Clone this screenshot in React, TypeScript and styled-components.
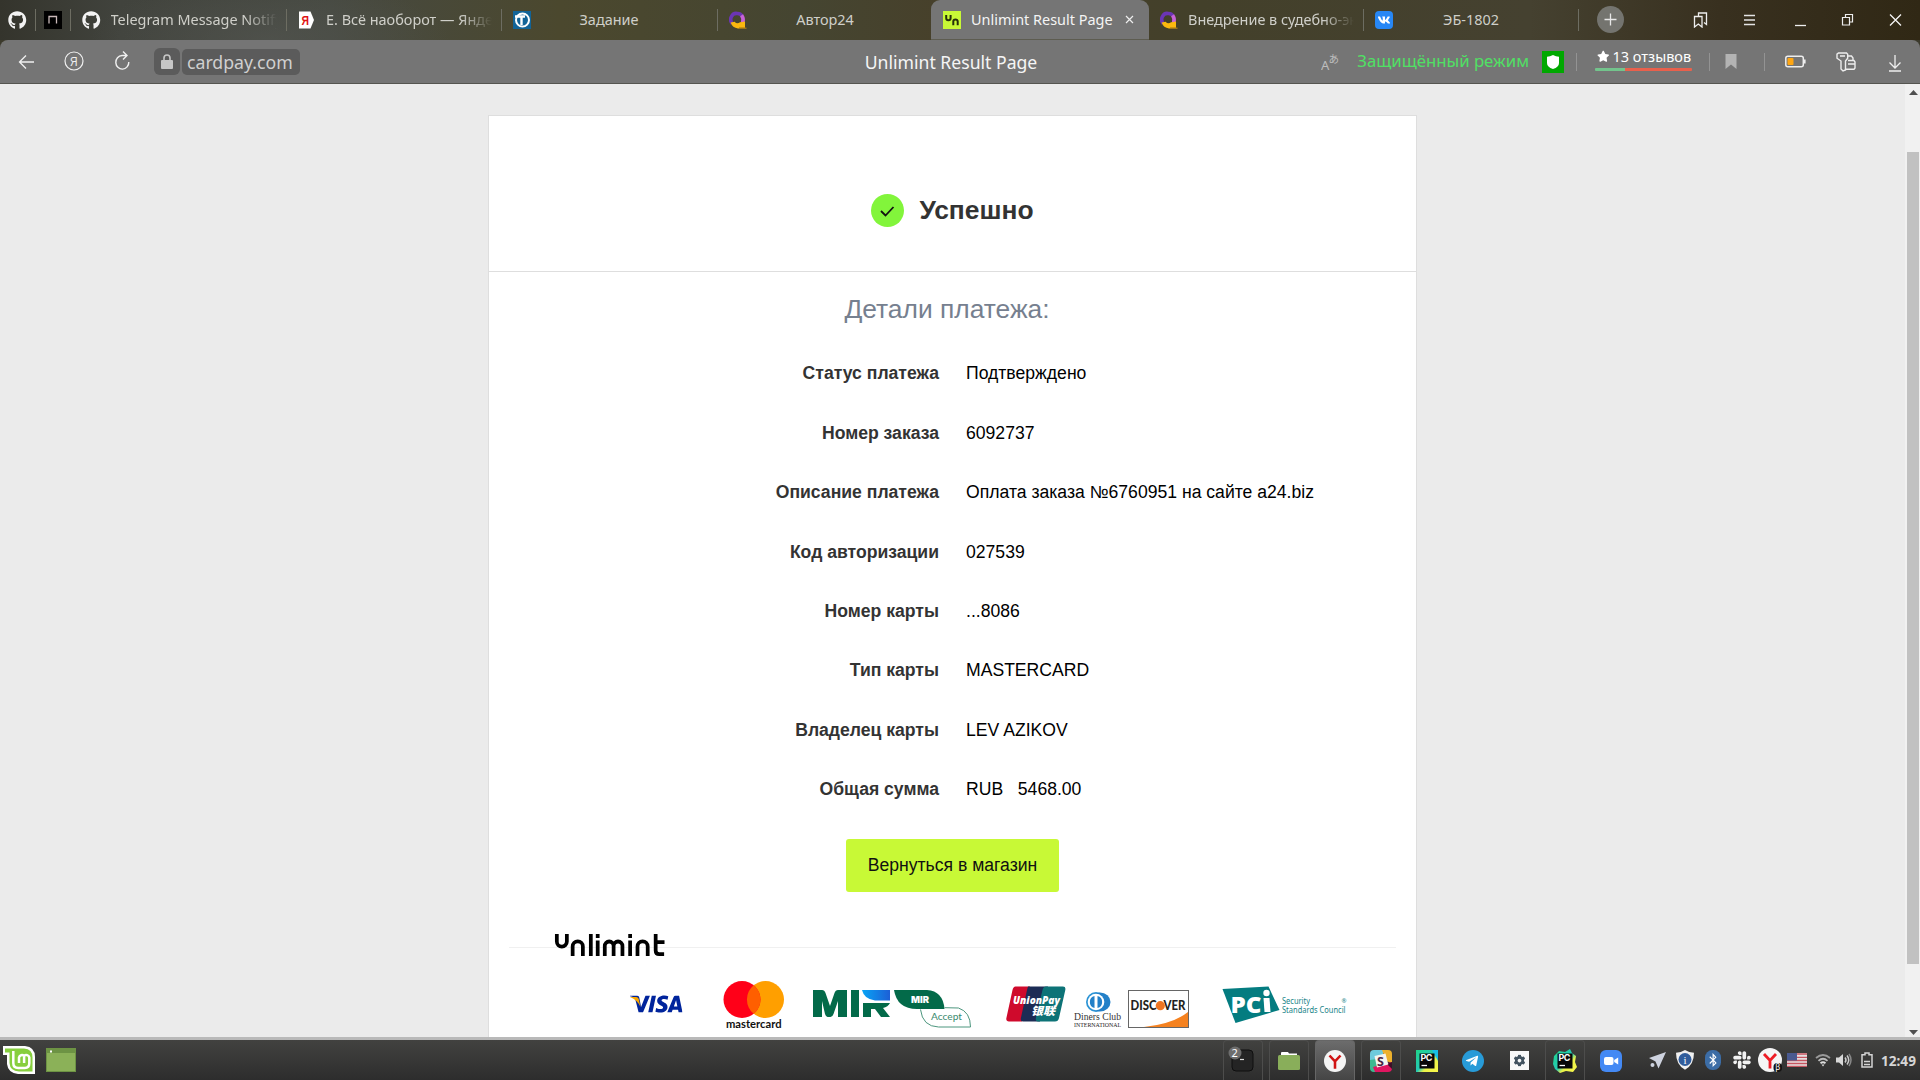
import React from "react";
import styled, { createGlobalStyle, css } from "styled-components";
import { FaGithub, FaVk, FaCog, FaSlack, FaBluetoothB, FaTelegramPlane, FaStar } from "react-icons/fa";
import { SiVisa } from "react-icons/si";

const Global = createGlobalStyle`
  html, body { margin: 0; padding: 0; overflow: hidden; background: #ebebeb; }
  svg { display: block; flex: none; }
  svg text { white-space: pre; }
`;

const ui = `"Noto Sans", "Open Sans", sans-serif`;
const sans = `"Liberation Sans", Arial, sans-serif`;

const Screen = styled.div`
  width: 1920px;
  height: 1080px;
  display: flex;
  flex-direction: column;
  font-family: ${ui};
`;

/* ---------- tab strip ---------- */
const TabStrip = styled.header`
  height: 40px;
  flex: none;
  display: flex;
  background:
    radial-gradient(ellipse 180px 60px at 270px 40px, rgba(86, 88, 84, 0.55), transparent),
    linear-gradient(90deg, #34342c 0, #41433d 120px, #464941 330px, #4b482e 560px, #454531 800px, #47402a 950px, #43402a 1200px, #454130 1530px, #38301f 1720px, #302815 1920px);
`;

const Tab = styled.div<{ $w: number; $sep?: boolean; $active?: boolean }>`
  width: ${(p) => p.$w}px;
  height: 40px;
  box-sizing: border-box;
  flex: none;
  display: flex;
  align-items: center;
  padding-left: ${(p) => (p.$active ? 12 : p.$w < 50 ? 8 : 11)}px;
  background-image: ${(p) => (p.$sep ? "linear-gradient(#6d6d62, #6d6d62)" : "none")};
  background-repeat: no-repeat;
  background-size: 1px 22px;
  background-position: right 9px;
  ${(p) =>
    p.$active &&
    css`
      background: #757575;
      border-radius: 9px 9px 0 0;
      border-bottom: 1px solid #5d5c50;
    `}
`;

const TabTitle = styled.span<{ $fade?: boolean; $center?: boolean; $on?: boolean }>`
  width: ${(p) => (p.$center ? 156 : p.$on ? 143 : 167)}px;
  margin-left: ${(p) => (p.$center ? 0 : 10)}px;
  margin-top: ${(p) => (p.$on ? 0 : -1)}px;
  text-align: ${(p) => (p.$center ? "center" : "left")};
  font-size: 14.45px;
  line-height: 20px;
  white-space: nowrap;
  overflow: hidden;
  color: ${(p) => (p.$on ? "#f4f4f4" : "#cfcfc9")};
  ${(p) => p.$fade && css`mask-image: linear-gradient(90deg, #000 135px, transparent 166px);`}
`;

const NewTab = styled.div`
  width: 27px;
  height: 27px;
  margin: 6px 0 0 18px;
  border-radius: 50%;
  background: #74746f;
`;

const WindowButtons = styled.div`
  display: flex;
  align-items: center;
  gap: 35px;
  margin-left: auto;
  padding: 0 18px 1px 0;
`;

/* ---------- toolbar ---------- */
const ToolbarBack = styled.div`
  height: 44px;
  flex: none;
  background: #3c3a2c;
`;

const Toolbar = styled.nav`
  height: 44px;
  box-sizing: border-box;
  display: grid;
  grid-template-columns: 1fr auto 1fr;
  align-items: center;
  background: #757575;
  border-bottom: 1px solid #555550;
  border-radius: 8px 8px 0 0;
`;

const ToolLeft = styled.div`
  display: flex;
  align-items: center;
  padding-left: 18px;
  margin-right: 15px;
`;

const LockBox = styled.div`
  width: 26px;
  height: 27px;
  margin: 0 2px 0 24px;
  border-radius: 6px;
  background: #5b5b5b;
  display: flex;
  align-items: center;
  justify-content: center;
`;

const Url = styled.div`
  height: 26px;
  width: 118px;
  box-sizing: border-box;
  padding-left: 5px;
  border-radius: 5px;
  background: #5b5b5b;
  color: #d0d0d0;
  font-size: 17.7px;
  line-height: 26px;
`;

const PageTitle = styled.div`
  font-size: 17.6px;
  line-height: 26px;
  color: #f5f5f5;
  white-space: nowrap;
  margin-right: 18px;
`;

const ToolRight = styled.div`
  display: flex;
  align-items: center;
  justify-content: flex-end;
  padding-right: 18px;
`;

const Secure = styled.span`
  margin: -2px 0 0 18px;
  font-size: 16.75px;
  line-height: 22px;
  color: #50e064;
  white-space: nowrap;
`;

const ShieldBox = styled.div`
  width: 22px;
  height: 22px;
  margin: 1px 0 0 13px;
  background: #00a800;
  display: flex;
  align-items: center;
  justify-content: center;
`;

const Divider = styled.i<{ $l: number; $r: number }>`
  width: 1px;
  height: 18px;
  margin: 0 ${(p) => p.$r}px 0 ${(p) => p.$l}px;
  background: #939393;
`;

const Reviews = styled.div`
  width: 97px;
  height: 28px;
  margin-top: -10px;
  display: flex;
  flex-direction: column;
`;

const ReviewText = styled.div`
  display: flex;
  align-items: center;
  gap: 3px;
  padding: 2px 0 0 2px;
  height: 24px;
  font-size: 14.5px;
  color: #fff;
  white-space: nowrap;
`;

const ReviewBar = styled.div`
  height: 3px;
  border-radius: 1px;
  background: linear-gradient(90deg, #73c48c 30px, #e9604c 30px);
`;

/* ---------- page ---------- */
const Viewport = styled.main`
  height: 953px;
  flex: none;
  display: flex;
  background: #ebebeb;
  overflow: hidden;
`;

const PageArea = styled.div`
  width: 1905px;
  display: flex;
  justify-content: center;
  padding-top: 31px;
`;

const Card = styled.section`
  width: 929px;
  height: 960px;
  flex: none;
  box-sizing: border-box;
  border: 1px solid #dedede;
  background: #fff;
  font-family: ${sans};
  display: flex;
  flex-direction: column;
`;

const Status = styled.div`
  height: 156px;
  box-sizing: border-box;
  padding-top: 34px;
  flex: none;
  border-bottom: 1px solid #dedede;
  display: flex;
  align-items: center;
  justify-content: center;
  gap: 15px;
  font-size: 26.4px;
  font-weight: 700;
  color: #333;
`;

const Heading = styled.h2`
  margin: 19px 11px 0 0;
  text-align: center;
  font-size: 26.4px;
  line-height: 36px;
  font-weight: 400;
  color: #76808f;
`;

const Details = styled.dl`
  margin: 17.3px 0 0;
  display: grid;
  grid-template-columns: 450px 1fr;
  column-gap: 27px;
  grid-auto-rows: 59.4px;
  align-items: center;
  font-size: 17.6px;
`;

const Label = styled.dt`
  text-align: right;
  font-weight: 700;
  color: #333;
`;

const Value = styled.dd`
  margin: 0;
  color: #000;
  white-space: pre;
`;

const ReturnButton = styled.button`
  align-self: center;
  width: 213px;
  height: 53px;
  flex: none;
  margin-top: 19.7px;
  border: 0;
  border-radius: 3px;
  background: #c8f936;
  color: #111;
  font: 17.6px ${sans};
  padding: 0;
`;

const BrandLine = styled.div`
  height: 26px;
  margin: 39px 20px 0;
  padding-left: 44px;
  flex: none;
  background: linear-gradient(#f0f0f0, #f0f0f0) 0 16px / 100% 1px no-repeat;
`;

const Logos = styled.div`
  display: flex;
  align-items: flex-start;
  padding-left: 141px;
  height: 60px;
  margin-top: 24px;
`;

const LogoBox = styled.div<{ $l?: number; $t?: number }>`
  margin: ${(p) => p.$t ?? 0}px 0 0 ${(p) => p.$l ?? 0}px;
`;

const Scrollbar = styled.aside`
  width: 15px;
  background: #f1f1f1;
  display: flex;
  flex-direction: column;
  align-items: center;
`;

const Thumb = styled.div`
  width: 12px;
  height: 812px;
  margin: 57px 0 66px 1px;
  background: #c1c1c1;
`;

/* ---------- taskbar ---------- */
const Taskbar = styled.footer`
  height: 43px;
  box-sizing: border-box;
  flex: none;
  display: flex;
  border-top: 3px solid #8d8d8d;
  border-image: linear-gradient(#b9b9b9, #858585) 1;
  border-width: 3px 0 0;
  background: linear-gradient(#424240, #2d2d2d);
`;

const StartArea = styled.div`
  display: flex;
  align-items: center;
  gap: 11px;
  padding-left: 3px;
`;

const Tasks = styled.div`
  display: flex;
  gap: 6px;
  margin-left: auto;
`;

const Task = styled.div<{ $box?: boolean; $active?: boolean }>`
  width: 40px;
  height: 40px;
  box-sizing: border-box;
  display: flex;
  align-items: center;
  justify-content: center;
  border: 1px solid ${(p) => (p.$active ? "#666" : p.$box ? "#4d4d4c" : "transparent")};
  border-bottom: 0;
  border-radius: 4px 4px 0 0;
  background: ${(p) => (p.$active ? "linear-gradient(#6c6c6c, #454545)" : "none")};
`;

const Tray = styled.div`
  display: flex;
  align-items: center;
  width: 274px;
  margin-left: 15px;
  flex: none;
`;

const TrayItem = styled.div<{ $w: number; $ml?: number }>`
  width: ${(p) => p.$w}px;
  margin-left: ${(p) => p.$ml ?? 0}px;
  flex: none;
  display: flex;
  justify-content: center;
`;

const Clock = styled.time`
  margin-left: 8px;
  font: 700 13.6px "Noto Sans", sans-serif;
  color: #d6d6d6;
`;

/* ---------- icons ---------- */
const QLogo = () => (
  <svg width="18" height="20" viewBox="0 0 18 20">
    <path d="M3.2 13.5A5.500 6 0 0 1 8 3.500Q11.500 3.300 13 6" fill="none" stroke="#6b35b5" strokeWidth="3.600" />
    <path d="M12.600 5.300q2.500 3.700 1 7.700" fill="none" stroke="#c862d8" strokeWidth="3.600" />
    <path d="M1.6 12.6l4-.9Q8 14.600 11 12.300L16 11.500V18.500H9Q3.500 18 1.600 12.600z" fill="#fbb80f" />
    <path d="M10 17.500h7.500v1.500H10z" fill="#9c7418" />
  </svg>
);

const UnIcon = () => (
  <svg width="18" height="18" viewBox="0 0 18 18">
    <rect width="18" height="18" fill="#c8f936" />
    <g fill="none" stroke="#26310a" strokeWidth="2">
      <path d="M3.200 4v3a2.200 2.200 0 0 0 4.400 0V4M10.300 14.200v-3.600a2.200 2.200 0 0 1 4.400 0v3.600" />
    </g>
  </svg>
);

const PcIcon = ({ framed }: { framed?: boolean }) => (
  <svg width="24" height="24" viewBox="0 0 24 24">
    <defs>
      <linearGradient id={framed ? "pa" : "pb"} x1="0" y1="0" x2="1" y2="1">
        <stop offset="0" stopColor="#20d489" />
        <stop offset=".5" stopColor="#25c9b4" />
        <stop offset=".65" stopColor="#e9f24a" />
        <stop offset="1" stopColor="#fcf84a" />
      </linearGradient>
    </defs>
    <path
      d={framed ? "M1 7l5-5 6 1 5-3 2 4 4 3-1 6 2 5-4 5-7-1-6 2-5-4-2-5z" : "M1 1h22v22H1z"}
      fill={`url(#${framed ? "pa" : "pb"})`}
    />
    {!framed && <path d="M17 1h6v11z" fill="#18bfe8" />}
    <rect x="4.500" y="4.500" width="15" height="15" fill="#080808" />
    <text x="5.500" y="12.300" fontFamily="Inter, sans-serif" fontWeight="700" fontSize="9" textLength="12" fill="#fff">PC</text>
    <path d="M6.500 16.500h5.500" stroke="#fff" strokeWidth="1.300" />
  </svg>
);

const YBrowser = ({ size, beta }: { size: number; beta?: boolean }) => (
  <svg width={size} height={size} viewBox="0 0 24 24">
    <circle cx="12" cy="12" r="12" fill="#f5f5f5" />
    <path d="M6 6l6 6.500L18 6M12 12v8.500" fill="none" stroke={beta ? "#ee1c25" : "#d01414"} strokeWidth="2.800" />
    {beta && <rect x="15.500" y="15" width="8.500" height="9" rx="4" fill="#151515" />}
    {beta && <text x="17.200" y="22" fontSize="8" fontFamily="Noto Sans" fill="#fff">β</text>}
  </svg>
);

const BrandLogo = () => (
  <svg width="112" height="26" viewBox="0 0 114 26" preserveAspectRatio="none">
    <g fill="none" stroke="#000" strokeWidth="3.800">
      <path d="M3.900 3v7.500a5.100 5.100 0 0 0 10.200 0V3" />
      <path d="M20 25V15.500a5.200 5.200 0 0 1 10.400 0V25" />
      <path d="M38.500 3v22M45.500 9.500V25M45.500 3v4" />
      <path d="M52.700 25V15a4.500 4.500 0 0 1 9 0v10M61.700 15a4.500 4.500 0 0 1 9 0v10" />
      <path d="M78.500 9.500V25M78.500 3v4M86 25V15.500a5.200 5.200 0 0 1 10.400 0V25" />
      <path d="M104.500 3v16.500q0 3.600 3.600 3.600h5M104.500 11.200h9" />
    </g>
  </svg>
);

const Mir = () => (
  <svg width="160" height="40" viewBox="0 0 160 40">
    <defs>
      <linearGradient id="mir" x1="0" x2="1">
        <stop stopColor="#08a4f5" />
        <stop offset="1" stopColor="#1d5fd6" />
      </linearGradient>
    </defs>
    <g fill="#036a49">
      <path d="M0 0h9q2.500 0 3.500 3l4.500 13 4.500-13q1-3 3.500-3h9v27h-9V11l-4.500 13q-1 3-3 3h-3q-1.500 0-2.500-3L9 11v16H0zM38 0h8v27h-8z" />
      <path d="M50 13h27q-2 4-7 5l7 9h-9l-6-8h-4v8h-8z" />
      <path d="M81 0h33q16 1 17.500 19H104Q84 19 81 0z" />
    </g>
    <path d="M49 0h28v10.500H62Q51 9 49 0z" fill="url(#mir)" />
    <path d="M107.500 19.500q2 17 18 17.500h32q0-15-12-19l-14-.3" fill="none" stroke="#4c967e" />
    <text x="98" y="12.500" fontFamily="Inter, sans-serif" fontWeight="900" fontSize="9" textLength="18" lengthAdjust="spacingAndGlyphs" fill="#fff">MIR</text>
    <text x="118" y="30" fontFamily="Lato, sans-serif" fontSize="10" textLength="31" lengthAdjust="spacingAndGlyphs" fill="#38896e">Accept</text>
  </svg>
);

const details: [string, string][] = [
  ["Статус платежа", "Подтверждено"],
  ["Номер заказа", "6092737"],
  ["Описание платежа", "Оплата заказа №6760951 на сайте a24.biz"],
  ["Код авторизации", "027539"],
  ["Номер карты", "...8086"],
  ["Тип карты", "MASTERCARD"],
  ["Владелец карты", "LEV AZIKOV"],
  ["Общая сумма", "RUB   5468.00"],
];

function Tabs() {
  return (
    <TabStrip>
      <Tab $w={36} $sep><FaGithub size={18.500} color="#f3f3f3" /></Tab>
      <Tab $w={35} $sep>
        <svg width="18" height="18"><rect width="18" height="18" fill="#000" /><path d="M5 12.500V5.500h7.500v7" fill="none" stroke="#c9b9b9" strokeWidth="1.300" /></svg>
      </Tab>
      <Tab $w={216} $sep><FaGithub size={18.500} color="#f3f3f3" /><TabTitle $fade>Telegram Message Notify</TabTitle></Tab>
      <Tab $w={215} $sep>
        <svg width="18" height="18"><path d="M1 .5H12.500l3.500 8.500-3.500 8.500H1z" fill="#fff" /><text x="3.500" y="14" fontFamily="Liberation Sans" fontWeight="700" fontSize="13.500" textLength="7.500" lengthAdjust="spacingAndGlyphs" fill="#e01414">Я</text></svg>
        <TabTitle $fade>Е. Всё наоборот — Яндекс</TabTitle>
      </Tab>
      <Tab $w={216} $sep>
        <svg width="18" height="18"><rect width="18" height="18" fill="#126498" /><circle cx="9.500" cy="9" r="6.500" fill="none" stroke="#fff" strokeWidth="2" /><path d="M2 5.500h10M8.500 5.500v8.500" stroke="#fff" strokeWidth="2.400" /></svg>
        <TabTitle $center>Задание</TabTitle>
      </Tab>
      <Tab $w={213}><QLogo /><TabTitle $center>Автор24</TabTitle></Tab>
      <Tab $w={218} $active>
        <UnIcon /><TabTitle $on>Unlimint Result Page</TabTitle>
        <svg width="9" height="9" style={{ marginLeft: 11 }}><path d="M1 1l7 7M8 1L1 8" stroke="#eee" strokeWidth="1.200" /></svg>
      </Tab>
      <Tab $w={215} $sep><QLogo /><TabTitle $fade>Внедрение в судебно-экспертную</TabTitle></Tab>
      <Tab $w={215} $sep>
        <svg width="18" height="18"><rect width="18" height="18" rx="4" fill="#2787f5" /><FaVk x="2.500" y="2.500" size={13} color="#fff" /></svg>
        <TabTitle $center>ЭБ-1802</TabTitle>
      </Tab>
      <NewTab><svg width="27" height="27"><path d="M13.500 7.500v12M7.500 13.500h12" stroke="#e8e8e8" strokeWidth="1.300" /></svg></NewTab>
      <WindowButtons>
        <svg width="15" height="16" fill="none" stroke="#eee" strokeWidth="1.300"><path d="M1.500 4.500h7.500V15l-3.700-3L1.500 15zM5.500 4.500V1h8v11.500l-2.500-2" /></svg>
        <svg width="13" height="12" stroke="#e4e4e4" strokeWidth="1.300"><path d="M1 1.500h11M1 6h11M1 10.500h11" /></svg>
        <svg width="12" height="14" style={{ marginLeft: 3 }} stroke="#eee" strokeWidth="1.300"><path d="M1 12.500h11" /></svg>
        <svg width="13" height="13" fill="none" stroke="#eee" strokeWidth="1.200"><path d="M1.500 4.500h7V12h-7zM4.500 4.500V1.500h7V9H8.500" /></svg>
        <svg width="13" height="13" stroke="#f4f4f4" strokeWidth="1.300"><path d="M1 1.500l11 11M12 1.500l-11 11" /></svg>
      </WindowButtons>
    </TabStrip>
  );
}

function Tools() {
  return (
    <ToolbarBack>
      <Toolbar>
        <ToolLeft>
          <svg width="16" height="16" fill="none" stroke="#f0f0f0" strokeWidth="1.300"><path d="M16 8H1.500M8 1.500L1.500 8 8 14.500" /></svg>
          <svg width="20" height="20" style={{ margin: "-2px 0 0 30px" }}><circle cx="10" cy="10" r="9" fill="none" stroke="#f0f0f0" strokeWidth="1.200" /><text x="6" y="15" fontFamily="Liberation Sans" fontSize="13.500" textLength="7.500" lengthAdjust="spacingAndGlyphs" fill="#f0f0f0">Я</text></svg>
          <svg width="16" height="20" style={{ margin: "-4px 0 0 30px" }} fill="none" stroke="#f0f0f0" strokeWidth="1.400"><path d="M12.500 5.500H8A6.500 6.800 0 1 0 14.800 12M9 1.500l4 4-4 4" /></svg>
          <LockBox><svg width="12" height="15"><rect x="0" y="6" width="12" height="9" rx="1" fill="#c6c6c6" /><path d="M3 7V4a3 3 0 0 1 6 0v3" fill="none" stroke="#c6c6c6" strokeWidth="1.600" /></svg></LockBox>
          <Url>cardpay.com</Url>
        </ToolLeft>
        <PageTitle>Unlimint Result Page</PageTitle>
        <ToolRight>
          <svg width="18" height="18"><text x="0" y="17" fontFamily="Noto Sans" fontSize="13" fill="#bdbdbd">A</text><text x="7.500" y="10" fontFamily="Noto Sans CJK JP" fontSize="10.500" fill="#bdbdbd">あ</text></svg>
          <Secure>Защищённый режим</Secure>
          <ShieldBox><svg width="12" height="14"><path d="M6 0q3 1.800 6 1.800V8q0 4-6 6Q0 12 0 8V1.800Q3 1.800 6 0z" fill="#fff" /></svg></ShieldBox>
          <Divider $l={12} $r={18} />
          <Reviews>
            <ReviewText><FaStar size={12.500} /><span>13 отзывов</span></ReviewText>
            <ReviewBar />
          </Reviews>
          <Divider $l={17} $r={15} />
          <svg width="12" height="15"><path d="M.5 0h11v15L6 10.500.5 15z" fill="#b3b3b3" /></svg>
          <Divider $l={27} $r={20} />
          <svg width="22" height="13"><rect x=".8" y="1.300" width="17.500" height="10.400" rx="2" fill="none" stroke="#eee" strokeWidth="1.500" /><rect x="2.500" y="3" width="6" height="7" rx="1" fill="#ffa612" /><path d="M19.500 4.500v4" stroke="#eee" strokeWidth="2.200" /></svg>
          <svg width="20" height="20" style={{ margin: "0 0 0 29px" }} fill="none" stroke="#ededed" strokeWidth="1.400"><path d="M2.500 1h8l1.200 1.200v4L9.500 9v9L7 19l-2-2V9L1 6.200V2.200zM4 4h5M12 4h3.500l1.500 2v2.500M12 8.500h6l1 1.500v6l-1 1.200H9.500M12 12h7" /></svg>
          <svg width="14" height="17" style={{ margin: "3px 0 0 32px" }} fill="none" stroke="#eee" strokeWidth="1.300"><path d="M7 0v12.500M1.500 7.500L7 13l5.500-5.500M1 16h12" /></svg>
        </ToolRight>
      </Toolbar>
    </ToolbarBack>
  );
}

function PaymentLogos() {
  return (
    <Logos>
      <LogoBox $t={3}>
        <svg width="55" height="40"><svg y="-6.500" width="52.500" height="53" viewBox="0 0 24 24" preserveAspectRatio="none"><SiVisa color="#00249c" width="24" height="24" size={24} /></svg><path d="M0 13h6q2.500 0 3 3l1.500 7Q7.500 16 0 13z" fill="#f7a600" /></svg>
      </LogoBox>
      <LogoBox $l={38}>
        <svg width="64" height="50">
          <circle cx="42.500" cy="18.500" r="18.500" fill="#ff9f00" />
          <circle cx="19" cy="18.500" r="18.500" fill="#ff0018" />
          <path d="M30.700 4.200a18.500 18.500 0 0 1 0 28.600a18.500 18.500 0 0 1 0-28.600z" fill="#ff5f00" />
          <text x="3" y="46.500" fontFamily="Lato, sans-serif" fontWeight="700" fontSize="11" textLength="55.500" lengthAdjust="spacingAndGlyphs" fill="#111">mastercard</text>
        </svg>
      </LogoBox>
      <LogoBox $l={26} $t={9}><Mir /></LogoBox>
      <LogoBox $l={33} $t={5}>
        <svg width="60" height="36">
          <path d="M9.500.5H24L16 35.500H3Q-.5 35.500.5 31.500L6.500 4Q7.300.5 9.500.5z" fill="#cf0a2c" />
          <path d="M22 .5h20L34 35.500H17Q14 35.500 15 31.500L21 4z" fill="#1c2c55" />
          <path d="M40 .5h17q3 0 2.300 3.500L53 32q-.8 3.500-4 3.500H32q-3 0-2-4L36.500 4Q37.300.5 40 .5z" fill="#0d7377" />
          <text x="7" y="17.500" fontFamily="Open Sans, sans-serif" fontWeight="800" fontStyle="italic" fontSize="11" textLength="47" lengthAdjust="spacingAndGlyphs" fill="#fff">UnionPay</text>
          <text x="25" y="28.500" fontFamily="Noto Sans CJK SC" fontWeight="900" fontStyle="italic" fontSize="11" textLength="24" lengthAdjust="spacingAndGlyphs" fill="#fff">银联</text>
        </svg>
      </LogoBox>
      <LogoBox $l={8} $t={11}>
        <svg width="49" height="37">
          <circle cx="22" cy="10" r="10" fill="#2a93d5" /><ellipse cx="26" cy="10" rx="10.500" ry="9.500" fill="#2380c8" />
          <circle cx="22" cy="10" r="8.300" fill="#fff" />
          <path d="M20.500 4a6.200 6.200 0 0 0 0 12zM23.500 4a6.200 6.200 0 0 1 0 12z" fill="#2380c8" />
          <text x="0" y="28" fontFamily="Liberation Serif" fontSize="10.500" textLength="47" lengthAdjust="spacingAndGlyphs" fill="#333">Diners Club</text>
          <text x="0" y="34.800" fontFamily="Liberation Serif" fontSize="6.500" textLength="47" lengthAdjust="spacingAndGlyphs" fill="#222">INTERNATIONAL</text>
        </svg>
      </LogoBox>
      <LogoBox $l={5} $t={9}>
        <svg width="61" height="38">
          <rect x=".5" y=".5" width="60" height="37" fill="#fff" stroke="#666" />
          <path d="M60 22v15H16Q45 34 60 22z" fill="#f58220" />
          <g fontFamily="Lato, sans-serif" fontWeight="900" fontSize="12.500" fill="#231f20">
            <text x="2.500" y="20" textLength="26" lengthAdjust="spacingAndGlyphs">DISC</text>
            <text x="35.500" y="20" textLength="22" lengthAdjust="spacingAndGlyphs">VER</text>
          </g>
          <circle cx="32.300" cy="15.700" r="4.600" fill="#ee7623" />
        </svg>
      </LogoBox>
      <LogoBox $l={33} $t={5}>
        <svg width="126" height="40">
          <path d="M.5 3L46.500 .5 57.500 24 13.500 37z" fill="#047c80" />
          <text x="8.500" y="26.500" fontFamily="Open Sans, sans-serif" fontWeight="800" fontSize="22" textLength="31" lengthAdjust="spacingAndGlyphs" fill="#fff">PC</text>
          <path d="M41.500 12h6l1 14h-6z" fill="#fff" /><circle cx="44.500" cy="7" r="3.200" fill="#fff" />
          <g fontFamily="Noto Sans, sans-serif" fontSize="8" fill="#178488">
            <text x="60" y="18" textLength="28" lengthAdjust="spacingAndGlyphs">Security</text>
            <text x="60" y="26.500" textLength="63.500" lengthAdjust="spacingAndGlyphs">Standards Council</text>
            <text x="119.500" y="16.500" fontSize="6">®</text>
          </g>
        </svg>
      </LogoBox>
    </Logos>
  );
}

function SystemBar() {
  return (
    <Taskbar>
      <StartArea>
        <svg width="32" height="30" viewBox="0 0 32 30"><path d="M0 1h22q10 1 10 11v17H15Q5 28 4 19V10H0z" fill="#fff" /><path d="M2 3.500h19q8.500.5 8.500 9V26.500H16Q7 26 6.500 18V7.500H2z" fill="#87cf3e" /><path d="M10.300 6v12q0 5 5 5h6.500q4.500 0 4.500-5v-5.500a3 3 0 0 0-5.200-1.500 3 3 0 0 0-5.100 1.500V18M21.100 12v6" fill="none" stroke="#fff" strokeWidth="2.500" /></svg>
        <svg width="30" height="24"><rect width="30" height="24" fill="#6d9344" /><rect x="1" y="5" width="28" height="18" fill="#8bb158" /><rect x="4" y="2.500" width="2" height="2" fill="#fff" /></svg>
      </StartArea>
      <Tasks>
        <Task $box>
          <svg width="30" height="28" style={{ marginLeft: -3, marginTop: -4 }}><rect x="5" y="5" width="21" height="21" rx="4" fill="#242424" stroke="#0e0e0e" /><path d="M13 14.500h4" stroke="#ddd" strokeWidth="1.200" /><circle cx="8" cy="8" r="6.500" fill="#6d6d6d" /><text x="4.500" y="12" fontSize="11" fontFamily="Noto Sans" fill="#fff">2</text></svg>
        </Task>
        <Task $box><svg width="22" height="20"><path d="M3 4V2q0-1 1-1h6l1 1.500h8V5z" fill="#fff" /><rect y="4" width="22" height="15" rx="1.500" fill="#89ae5a" /></svg></Task>
        <Task $active><YBrowser size={22} /></Task>
        <Task $box>
          <svg width="22" height="22"><defs><clipPath id="sl"><rect width="22" height="22" rx="4" /></clipPath></defs><g clipPath="url(#sl)"><path d="M0 0h13v7L0 12z" fill="#6ecadc" /><path d="M12 0h10v13l-6-2z" fill="#edb12c" /><path d="M0 10l7-1 3 13H0z" fill="#3eb890" /><path d="M3 17l19-5v10H5z" fill="#df1660" /><path d="M17 14l5-2v7z" fill="#3b1028" /><path d="M4.500 6l11-2.500 2.800 11L7 17.500z" fill="#f6f4ee" /></g><text x="7" y="15.500" fontFamily="Open Sans" fontWeight="700" fontSize="12.500" fill="#4a2545">S</text></svg>
        </Task>
        <Task><PcIcon /></Task>
        <Task><svg width="22" height="22"><circle cx="11" cy="11" r="11" fill="#289bd8" /><FaTelegramPlane x="3" y="4" size={14} color="#fff" /></svg></Task>
        <Task><svg width="19" height="19"><rect width="19" height="19" fill="#f8f8f8" /><FaCog x="3.500" y="3.500" size={12} color="#42525f" /></svg></Task>
        <Task $box><PcIcon framed /></Task>
        <Task><svg width="22" height="22"><rect width="22" height="22" rx="6" fill="#4489f4" /><rect x="4" y="7" width="9.500" height="8" rx="2" fill="#fff" /><path d="M14.200 10l4-2.500v7l-4-2.500z" fill="#fff" /></svg></Task>
      </Tasks>
      <Tray>
        <TrayItem $w={17} $ml={3}><svg width="17" height="17"><path d="M17 0L9.500 16.500 6.500 9.500 0 6z" fill="#ced3df" /><circle cx="3.500" cy="13" r="2" fill="#ced3df" /></svg></TrayItem>
        <TrayItem $w={20} $ml={9}><svg width="20" height="20"><path d="M10 0q4 2.500 9 2.800 0 12.200-9 17Q1 15 1 2.800 6 2.500 10 0z" fill="#f0f0f0" /><circle cx="10" cy="9.500" r="6.500" fill="#315d9c" /><text x="8.500" y="13.500" fontFamily="Liberation Serif" fontSize="11" fill="#fff">i</text></svg></TrayItem>
        <TrayItem $w={16} $ml={10}><svg width="16" height="20"><rect width="16" height="20" rx="7.500" fill="#3c6da6" /><FaBluetoothB x="1" y="3" size={14} color="#fff" /></svg></TrayItem>
        <TrayItem $w={22} $ml={10}><FaSlack size={20} color="#f2f2f2" /></TrayItem>
        <TrayItem $w={24} $ml={5}><YBrowser size={24} beta /></TrayItem>
        <TrayItem $w={20} $ml={5}><svg width="20" height="14"><rect width="20" height="14" fill="#e6e0e2" /><path d="M0 1h20M0 4.300h20M0 7.500h20M0 10.500h20M0 13.400h20" stroke="#c65560" strokeWidth="1.300" /><rect width="10" height="7.500" fill="#4a5a90" /></svg></TrayItem>
        <TrayItem $w={16} $ml={8}><svg width="16" height="14" fill="none" strokeWidth="1.800"><path d="M1 5q7-6 14 0" stroke="#9a9a9a" /><path d="M3.500 7.800q4.500-4 9 0" stroke="#bbb" /><path d="M5.500 10.200q2.500-2 5 0" stroke="#ddd" /><path d="M6.500 11.500h3L8 13.500z" fill="#ddd" /></svg></TrayItem>
        <TrayItem $w={16} $ml={5}><svg width="16" height="14" fill="none" strokeWidth="1.500"><path d="M0 4.500h3L7 1v12L3 9.500H0z" fill="#d8d8d8" /><path d="M9 4.500q2 2.500 0 5M11 2.500q3.500 4.500 0 9" stroke="#ccc" /><path d="M13 1q4 6 0 12" stroke="#888" /></svg></TrayItem>
        <TrayItem $w={12} $ml={9}><svg width="12" height="16" fill="none" stroke="#d4d4d4" strokeWidth="1.500"><path d="M1 2.800h3V1h4v1.800h3V15H1zM3 12.500h6M3 9.500h6" /></svg></TrayItem>
        <Clock>12:49</Clock>
      </Tray>
    </Taskbar>
  );
}

export default function App() {
  return (
    <Screen>
      <Global />
      <Tabs />
      <Tools />
      <Viewport>
        <PageArea>
          <Card>
            <Status>
              <svg width="33" height="33"><circle cx="16.500" cy="16.500" r="16.500" fill="#82f53b" /><path d="M10 17l4.500 4.500 8-8.500" fill="none" stroke="#111" strokeWidth="1.800" /></svg>
              Успешно
            </Status>
            <Heading>Детали платежа:</Heading>
            <Details>
              {details.map(([label, value]) => (
                <React.Fragment key={label}>
                  <Label>{label}</Label>
                  <Value>{value}</Value>
                </React.Fragment>
              ))}
            </Details>
            <ReturnButton>Вернуться в магазин</ReturnButton>
            <BrandLine><BrandLogo /></BrandLine>
            <PaymentLogos />
          </Card>
        </PageArea>
        <Scrollbar>
          <svg width="9" height="5" style={{ margin: "6px 0 0 1px" }}><path d="M4.500 0L9 5H0z" fill="#505050" /></svg>
          <Thumb />
          <svg width="9" height="5" style={{ marginLeft: 1 }}><path d="M4.500 5L9 0H0z" fill="#505050" /></svg>
        </Scrollbar>
      </Viewport>
      <SystemBar />
    </Screen>
  );
}
